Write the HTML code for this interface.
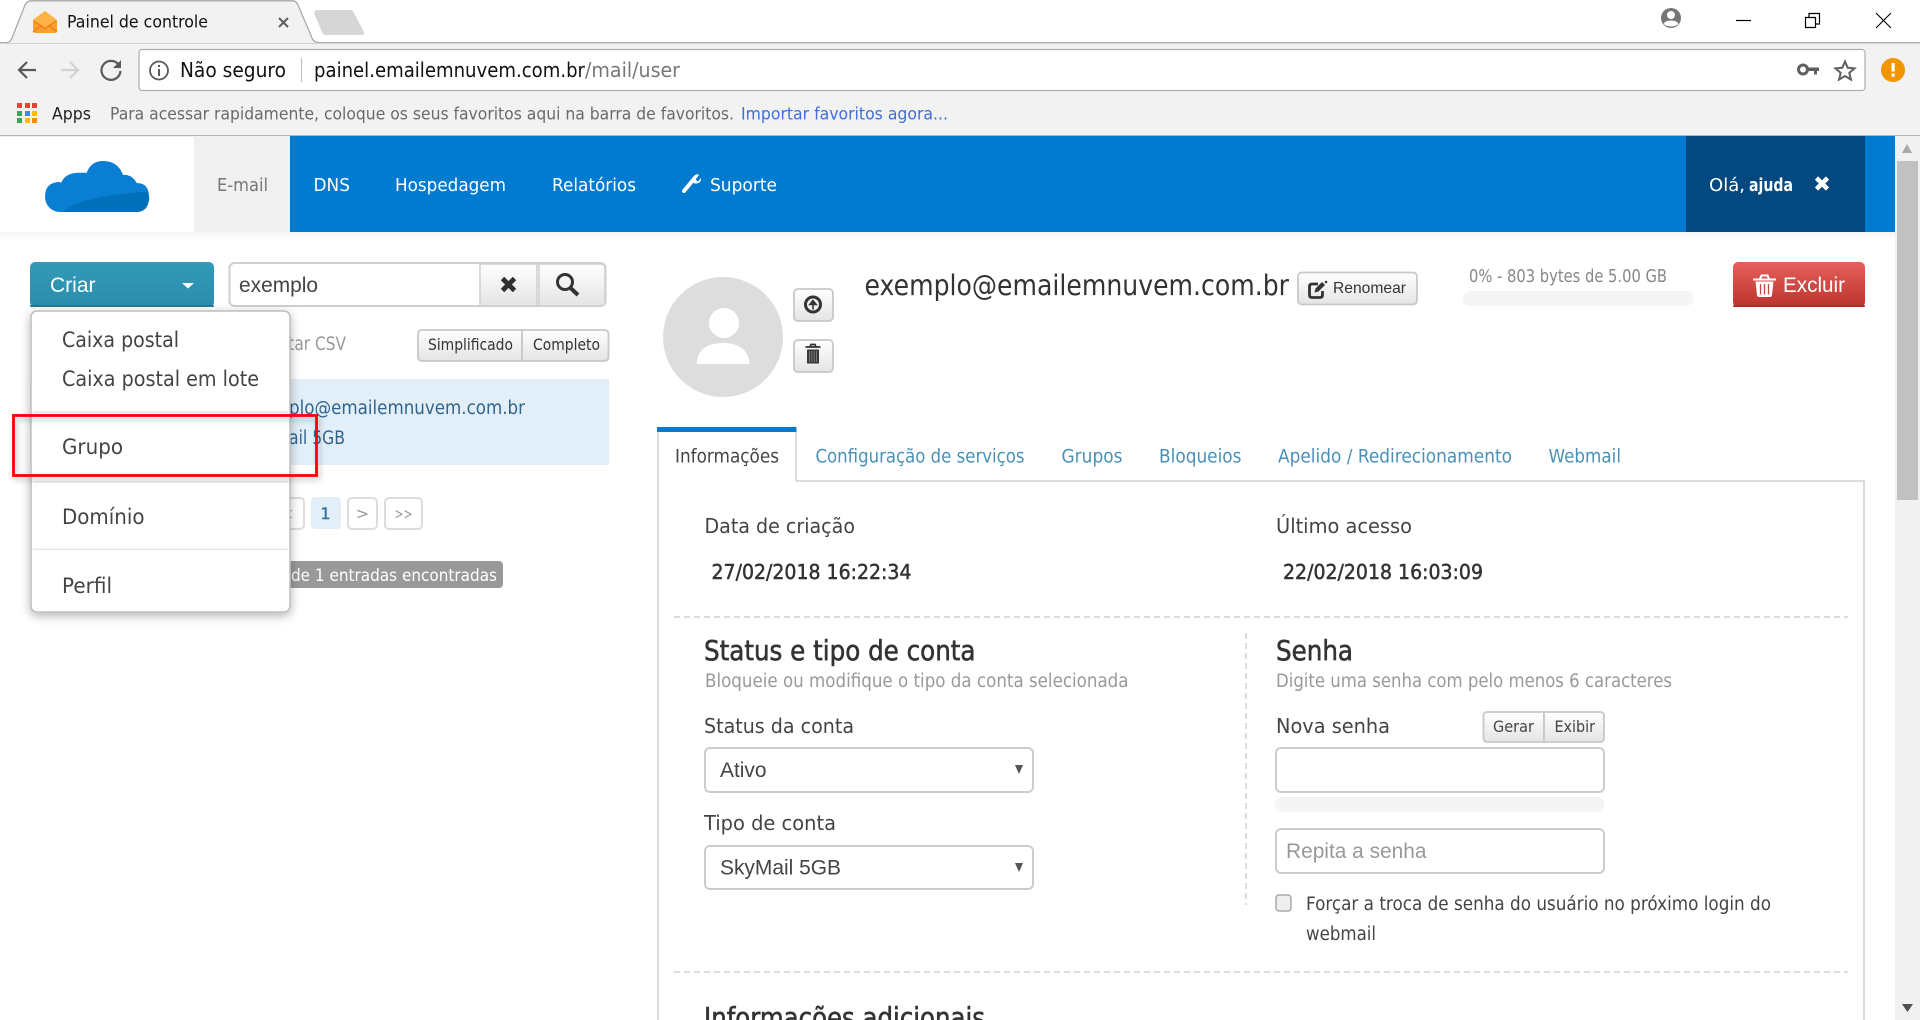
<!DOCTYPE html>
<html lang="pt-BR">
<head>
<meta charset="utf-8">
<title>Painel de controle</title>
<style>
html,body{margin:0;padding:0;background:#fff;width:1920px;height:1020px;overflow:hidden}
svg{display:block}
text{font-family:"DejaVu Sans","Liberation Sans",sans-serif;white-space:pre}
.a{font-family:"Liberation Sans",Arial,sans-serif}
</style>
</head>
<body>
<svg xmlns="http://www.w3.org/2000/svg" width="1920" height="1020" viewBox="0 0 1920 1020">
<defs>
<linearGradient id="gb" x1="0" y1="0" x2="0" y2="1"><stop offset="0" stop-color="#fff"/><stop offset="1" stop-color="#e4e4e4"/></linearGradient>
<linearGradient id="gc" x1="0" y1="0" x2="0" y2="1"><stop offset="0" stop-color="#349ab9"/><stop offset="1" stop-color="#2a8dab"/></linearGradient>
<linearGradient id="gr" x1="0" y1="0" x2="0" y2="1"><stop offset="0" stop-color="#e65f5c"/><stop offset="1" stop-color="#bb352e"/></linearGradient>
<linearGradient id="gn" x1="0" y1="0" x2="0" y2="1"><stop offset="0" stop-color="#dcdcdc"/><stop offset="1" stop-color="#fff"/></linearGradient>
<filter id="sh" x="-20%" y="-20%" width="140%" height="140%"><feDropShadow dx="0" dy="3" stdDeviation="5" flood-color="#000" flood-opacity=".3"/></filter>
<filter id="sh2" x="-10%" y="-20%" width="120%" height="150%"><feDropShadow dx="2" dy="3" stdDeviation="3" flood-color="#000" flood-opacity=".25"/></filter>
</defs>

<!-- Browser chrome -->
<rect width="1920" height="136" fill="#f2f2f2"/>
<rect width="1920" height="43" fill="#fff"/>
<rect y="42" width="1920" height="1.500" fill="#b4b4b4"/>
<path d="M0 43H7Q10 43 12 38L25 5Q27 .8 31 .8H293Q296 .8 298 5L312 38Q314 43 318 43H0Z" fill="#f2f2f2"/>
<path d="M7 42.500Q10 42.500 12 38L25 5Q27 .8 31 .8H293Q296 .8 298 5L312 38Q314 42.500 318 42.500" fill="none" stroke="#aaa" stroke-width="1.300"/>
<path d="M33 20L45 11L57 20V30Q57 33 54 33H36Q33 33 33 30Z" fill="#f9a02c"/>
<path d="M33 20L45 28L57 20L45 11Z" fill="#ffb347"/>
<path d="M33 32L42 25M57 32L48 25M34 21L45 28.500L56 21" stroke="#ef7d18" stroke-width="1.300" fill="none"/>
<text x="67" y="27.500" font-size="16.500" fill="#111" textLength="141" lengthAdjust="spacingAndGlyphs">Painel de controle</text>
<path d="M279 18L288 27M288 18L279 27" stroke="#5f5f5f" stroke-width="2"/>
<path d="M314 13Q314 10 318 10H350Q353 10 354 13L364 32Q365 35 361 35H326Q323 35 322 32Z" fill="#d6d6d6"/>

<circle cx="1671" cy="18" r="10" fill="#757575"/>
<circle cx="1671" cy="15" r="4" fill="#fff"/>
<path d="M1663.500 24Q1665 20.500 1671 20.500T1678.500 24Q1675.500 26.500 1671 26.500T1663.500 24Z" fill="#fff"/>
<path d="M1736 20.500H1751" stroke="#000" stroke-width="1.200"/>
<path d="M1805.500 17.500H1815.500V27.500H1805.500ZM1809 17V13.500H1819.500V24H1816" fill="none" stroke="#000" stroke-width="1.200"/>
<path d="M1876 13L1891 28M1891 13L1876 28" stroke="#000" stroke-width="1.100"/>

<path d="M36 70H19M27 62L19 70L27 78" fill="none" stroke="#5a5a5a" stroke-width="2.200"/>
<path d="M78 70H61M70 62L78 70L70 78" fill="none" stroke="#d2d2d2" stroke-width="2.200"/>
<path d="M118.500 64.500A9.500 9.500 0 1 0 120.500 71" fill="none" stroke="#5a5a5a" stroke-width="2.200"/>
<path d="M121 60V68H113Z" fill="#5a5a5a"/>

<rect x="139" y="49.500" width="1726" height="41" rx="3" fill="#fff" stroke="#aeaeae" stroke-width="1.200"/>
<circle cx="159" cy="70.500" r="9" fill="none" stroke="#5a5a5a" stroke-width="1.800"/>
<rect x="158" y="69" width="2" height="7" fill="#5a5a5a"/><rect x="158" y="65" width="2" height="2" fill="#5a5a5a"/>
<text x="180" y="77" font-size="20" fill="#111" textLength="106" lengthAdjust="spacingAndGlyphs">Não seguro</text>
<rect x="301" y="58" width="1" height="24" fill="#bdbdbd"/>
<text x="314" y="77" font-size="20" fill="#111" textLength="271" lengthAdjust="spacingAndGlyphs">painel.emailemnuvem.com.br</text>
<text x="585" y="77" font-size="20" fill="#777" textLength="95" lengthAdjust="spacingAndGlyphs">/mail/user</text>

<circle cx="1803" cy="69.500" r="4.500" fill="none" stroke="#5f5f5f" stroke-width="3"/>
<path d="M1807 67.500H1819V71H1817V74.500H1814V71H1807Z" fill="#5f5f5f"/>
<path d="M1845 61.500L1847.700 67.800L1854.500 68.400L1849.300 72.900L1850.900 79.500L1845 76L1839.100 79.500L1840.700 72.900L1835.500 68.400L1842.300 67.800Z" fill="none" stroke="#5f5f5f" stroke-width="2"/>
<circle cx="1893" cy="70" r="12" fill="#f29500"/>
<rect x="1891.500" y="63" width="3.200" height="8.500" fill="#fff"/><rect x="1891.500" y="73.500" width="3.200" height="3.200" fill="#fff"/>

<g>
<rect x="17" y="103" width="5" height="5" fill="#ea4335"/><rect x="25" y="103" width="5" height="5" fill="#ea4335"/><rect x="32" y="103" width="5" height="5" fill="#ea4335"/>
<rect x="17" y="111" width="5" height="5" fill="#34a853"/><rect x="25" y="111" width="5" height="5" fill="#4285f4"/><rect x="32" y="111" width="5" height="5" fill="#fbbc05"/>
<rect x="17" y="118" width="5" height="5" fill="#34a853"/><rect x="25" y="118" width="5" height="5" fill="#fbbc05"/><rect x="32" y="118" width="5" height="5" fill="#fb8c00"/>
</g>
<text x="52" y="119.500" font-size="16.500" fill="#222" textLength="39" lengthAdjust="spacingAndGlyphs">Apps</text>
<text x="110" y="119.500" font-size="16.500" fill="#6a6a6a" textLength="624" lengthAdjust="spacingAndGlyphs">Para acessar rapidamente, coloque os seus favoritos aqui na barra de favoritos.</text>
<text x="741" y="119.500" font-size="16.500" fill="#3f6fd8" textLength="207" lengthAdjust="spacingAndGlyphs">Importar favoritos agora...</text>
<rect y="135" width="1920" height="1.200" fill="#b4b4b4"/>

<!-- Top nav -->
<rect y="232" width="1895" height="8" fill="url(#gn)" opacity=".35"/>
<rect x="194" y="136" width="96" height="96" fill="#f0f0f0"/>
<rect x="290" y="136" width="1605" height="96" fill="#007bd0"/>
<rect x="1686" y="136" width="179" height="96" fill="#03497f"/>
<path d="M60 212A15 15 0 0 1 45 197Q45 183 58 182Q60 181.500 61 183Q65 173 78 172.700L86.700 172.700Q91 161 103 161Q118 161 123 175Q132 174 136.700 183Q149 183 149 197Q149 212 136 212Z" fill="#0a7ed2"/>
<path d="M63 212Q80 196 147 191.700Q150 196 149 200Q147 212 136 212Z" fill="#0070b9"/>
<text x="217" y="191" font-size="18" fill="#777" textLength="51" lengthAdjust="spacingAndGlyphs">E-mail</text>
<text x="313.500" y="191" font-size="18" fill="#fff" textLength="36.500" lengthAdjust="spacingAndGlyphs">DNS</text>
<text x="395" y="191" font-size="18" fill="#fff" textLength="111" lengthAdjust="spacingAndGlyphs">Hospedagem</text>
<text x="552" y="191" font-size="18" fill="#fff" textLength="84" lengthAdjust="spacingAndGlyphs">Relatórios</text>
<path d="M684 191L693.500 179.500" stroke="#fff" stroke-width="4" stroke-linecap="round"/>
<path d="M691.500 181A5.500 7 30 0 1 697 174L699 175L695.500 179.500L698 181.500L701 178Q701.500 184 694.500 183.500Z" fill="#fff"/>
<text x="710" y="191" font-size="18" fill="#fff" textLength="67" lengthAdjust="spacingAndGlyphs">Suporte</text>
<text x="1709" y="191" font-size="18" fill="#fff" textLength="36" lengthAdjust="spacingAndGlyphs">Olá,</text>
<text x="1749" y="191" font-size="18" font-weight="700" fill="#fff" textLength="44" lengthAdjust="spacingAndGlyphs">ajuda</text>
<path d="M1816.500 178L1827.500 189M1827.500 178L1816.500 189" stroke="#fff" stroke-width="4.500"/>

<!-- Scrollbar -->
<rect x="1895" y="136" width="25" height="884" fill="#f1f1f1"/>
<rect x="1897" y="161" width="21" height="339" fill="#c1c1c1"/>
<path d="M1907 144L1912 153H1902Z" fill="#a8a8a8"/>
<path d="M1902 1004H1913L1907.500 1012Z" fill="#505050"/>

<!-- Left column -->
<rect x="30" y="262" width="184" height="45" rx="5" fill="url(#gc)"/>
<rect x="30" y="305" width="184" height="2" rx="1" fill="#23788f"/>
<text class="a" x="50" y="292" font-size="21" fill="#fff" textLength="45.500" lengthAdjust="spacingAndGlyphs">Criar</text>
<path d="M182 283H194L188 288.500Z" fill="#fff"/>

<rect x="229.500" y="263" width="376" height="43" rx="5" fill="#fff" stroke="#cfcfcf" stroke-width="2"/>
<text class="a" x="239" y="292" font-size="21" fill="#444" textLength="79" lengthAdjust="spacingAndGlyphs">exemplo</text>
<path d="M480 264H537V306H480Z" fill="url(#gb)" stroke="#cfcfcf" stroke-width="1.500"/>
<path d="M539 264H601Q605 264 605 268V302Q605 306 601 306H539Z" fill="url(#gb)" stroke="#cfcfcf" stroke-width="1.500"/>
<path d="M502.500 278.500L514.500 290.500M514.500 278.500L502.500 290.500" stroke="#2f2f2f" stroke-width="4.800"/>
<circle cx="565" cy="282" r="7.500" fill="none" stroke="#333" stroke-width="3"/>
<path d="M570 287.500L578 295" stroke="#333" stroke-width="4"/>

<text x="244" y="350" font-size="18.500" fill="#999" textLength="102" lengthAdjust="spacingAndGlyphs">Exportar CSV</text>
<path d="M422.500 330H522V361H422.500Q418 361 418 357V334Q418 330 422.500 330Z" fill="url(#gb)" stroke="#c8c8c8" stroke-width="1.800"/>
<path d="M522 330H604Q608.500 330 608.500 334V357Q608.500 361 604 361H522Z" fill="url(#gb)" stroke="#c8c8c8" stroke-width="1.800"/>
<text x="428" y="350" font-size="16" fill="#333" textLength="85" lengthAdjust="spacingAndGlyphs">Simplificado</text>
<text x="533" y="350" font-size="16" fill="#333" textLength="67" lengthAdjust="spacingAndGlyphs">Completo</text>

<rect x="30" y="379" width="579" height="86" fill="#e2eff9"/>
<text x="289" y="414" font-size="18.500" fill="#31648c" textLength="236" lengthAdjust="spacingAndGlyphs">plo@emailemnuvem.com.br</text>
<text x="289" y="444" font-size="18.500" fill="#31648c" textLength="56" lengthAdjust="spacingAndGlyphs">ail 5GB</text>

<rect x="270" y="498" width="34" height="31" rx="4" fill="#fff" stroke="#ddd" stroke-width="2"/>
<text x="287" y="519" font-size="16" fill="#999" text-anchor="middle">&lt;</text>
<rect x="311" y="497" width="30" height="32" rx="4" fill="#e2eff9"/>
<text x="325.500" y="519" font-size="16" fill="#31759f" text-anchor="middle" stroke="#31759f" stroke-width=".4">1</text>
<rect x="348" y="498" width="29" height="31" rx="4" fill="#fff" stroke="#ddd" stroke-width="2"/>
<text x="362.500" y="519" font-size="16" fill="#999" text-anchor="middle">&gt;</text>
<rect x="385" y="498" width="37" height="31" rx="4" fill="#fff" stroke="#ddd" stroke-width="2"/>
<text x="403.500" y="519" font-size="15" fill="#999" text-anchor="middle" textLength="18" lengthAdjust="spacingAndGlyphs">&gt;&gt;</text>

<rect x="200" y="561" width="303" height="27" rx="4" fill="#999"/>
<text x="291" y="581" font-size="17" fill="#fff" textLength="206" lengthAdjust="spacingAndGlyphs">de 1 entradas encontradas</text>

<!-- Dropdown -->
<rect x="31" y="311" width="259" height="301" rx="6" fill="#fff" stroke="#bdbdbd" stroke-width="1.500" filter="url(#sh)"/>
<text x="62" y="347" font-size="21" fill="#444" textLength="117" lengthAdjust="spacingAndGlyphs">Caixa postal</text>
<text x="62" y="386" font-size="21" fill="#444" textLength="197" lengthAdjust="spacingAndGlyphs">Caixa postal em lote</text>
<rect x="33" y="411.500" width="255" height="1.500" fill="#e8e8e8"/>
<text x="62" y="454" font-size="21" fill="#444" textLength="61" lengthAdjust="spacingAndGlyphs">Grupo</text>
<rect x="33" y="481" width="255" height="1.500" fill="#e8e8e8"/>
<text x="62" y="524" font-size="21" fill="#444" textLength="82.500" lengthAdjust="spacingAndGlyphs">Domínio</text>
<rect x="33" y="548.500" width="255" height="1.500" fill="#e8e8e8"/>
<text x="62" y="593" font-size="21" fill="#444" textLength="50" lengthAdjust="spacingAndGlyphs">Perfil</text>

<!-- Red highlight -->
<rect x="13.500" y="415.500" width="303" height="60" fill="none" stroke="#f00" stroke-width="2.800" filter="url(#sh2)"/>

<!-- Profile header -->
<circle cx="723" cy="337" r="60" fill="#ddd"/>
<circle cx="724" cy="323" r="15" fill="#fff"/>
<path d="M696.500 364Q698 343 723 343T749.500 364Z" fill="#fff"/>
<rect x="794" y="289" width="39" height="32" rx="4" fill="url(#gb)" stroke="#c8c8c8" stroke-width="1.800"/>
<circle cx="813" cy="304.500" r="7.500" fill="none" stroke="#333" stroke-width="3"/>
<path d="M813 309.500V302M809.800 304.500L813 300.500L816.200 304.500Z" fill="#333" stroke="#333" stroke-width="1.600"/>
<rect x="794" y="340" width="39" height="32" rx="4" fill="url(#gb)" stroke="#c8c8c8" stroke-width="1.800"/>
<path d="M805.500 347H820.500M810 347L811 344.500H815L816 347" fill="none" stroke="#333" stroke-width="1.800"/>
<rect x="807" y="349.500" width="12" height="14" fill="#3a3a3a"/>
<path d="M809.500 351V362M811.800 351V362M814.200 351V362M816.500 351V362" stroke="#8a8a8a" stroke-width=".8"/>

<text x="864.500" y="295" font-size="28.500" fill="#333" textLength="424.500" lengthAdjust="spacingAndGlyphs">exemplo@emailemnuvem.com.br</text>
<rect x="1298" y="272.500" width="119" height="32" rx="4" fill="url(#gb)" stroke="#c8c8c8" stroke-width="1.800"/>
<path d="M1318 284H1312Q1309.500 284 1309.500 286.500V295Q1309.500 297.500 1312 297.500H1320Q1322.500 297.500 1322.500 295V291" fill="none" stroke="#333" stroke-width="2.800"/>
<path d="M1314.500 292.500L1315.500 288.500L1322 282L1325 285L1318.500 291.500Z" fill="#333"/><circle cx="1326" cy="282" r="1.300" fill="#333"/>
<text class="a" x="1333" y="293" font-size="16" fill="#333" textLength="73" lengthAdjust="spacingAndGlyphs">Renomear</text>

<text x="1469" y="282" font-size="17.500" fill="#888" textLength="198" lengthAdjust="spacingAndGlyphs">0% - 803 bytes de 5.00 GB</text>
<rect x="1463" y="291" width="230" height="15" rx="7" fill="#f5f5f5"/>

<rect x="1733" y="262" width="132" height="45" rx="5" fill="url(#gr)"/>
<rect x="1733" y="305" width="132" height="2" rx="1" fill="#ae3029"/>
<path d="M1753 279.500H1776M1760 279L1761.500 275.500H1767.500L1769 279" fill="none" stroke="#fff" stroke-width="2"/>
<path d="M1755.500 281.500H1773.500L1772 295Q1771.800 297 1770 297H1759Q1757.200 297 1757 295Z" fill="#fff"/>
<path d="M1760.500 284V294.500M1764.500 284V294.500M1768.500 284V294.500" stroke="#c9453f" stroke-width="1.300"/>
<text class="a" x="1783" y="292" font-size="21" fill="#fff" textLength="62" lengthAdjust="spacingAndGlyphs">Excluir</text>

<!-- Tabs -->
<rect x="796" y="480" width="1069" height="2" fill="#ddd"/>
<rect x="657" y="432" width="2" height="588" fill="#ddd"/>
<rect x="795" y="432" width="2" height="49" fill="#ddd"/>
<rect x="1863" y="480" width="2" height="540" fill="#ddd"/>
<rect x="657" y="427" width="139.500" height="5" fill="#007bd0"/>
<text x="675" y="462.500" font-size="18.500" fill="#444" textLength="104" lengthAdjust="spacingAndGlyphs">Informações</text>
<text x="815.500" y="462.500" font-size="18.500" fill="#4a90b5" textLength="209" lengthAdjust="spacingAndGlyphs">Configuração de serviços</text>
<text x="1061.500" y="462.500" font-size="18.500" fill="#4a90b5" textLength="61" lengthAdjust="spacingAndGlyphs">Grupos</text>
<text x="1159" y="462.500" font-size="18.500" fill="#4a90b5" textLength="82.500" lengthAdjust="spacingAndGlyphs">Bloqueios</text>
<text x="1278" y="462.500" font-size="18.500" fill="#4a90b5" textLength="234" lengthAdjust="spacingAndGlyphs">Apelido / Redirecionamento</text>
<text x="1548.500" y="462.500" font-size="18.500" fill="#4a90b5" textLength="72.500" lengthAdjust="spacingAndGlyphs">Webmail</text>

<!-- Panel body -->
<text x="704.500" y="533" font-size="20.500" fill="#444" textLength="150.500" lengthAdjust="spacingAndGlyphs">Data de criação</text>
<text x="711.500" y="579" font-size="20.500" fill="#333" stroke="#333" stroke-width=".5" textLength="200" lengthAdjust="spacingAndGlyphs">27/02/2018 16:22:34</text>
<text x="1276" y="533" font-size="20.500" fill="#444" textLength="136" lengthAdjust="spacingAndGlyphs">Último acesso</text>
<text x="1283" y="579" font-size="20.500" fill="#333" stroke="#333" stroke-width=".5" textLength="200" lengthAdjust="spacingAndGlyphs">22/02/2018 16:03:09</text>
<path d="M674 617H1848M674 972H1848" stroke="#ddd" stroke-width="2" stroke-dasharray="6 4"/>
<path d="M1246 633V905" stroke="#ddd" stroke-width="2" stroke-dasharray="6 4"/>

<text x="704" y="660" font-size="28" fill="#333" textLength="271.500" lengthAdjust="spacingAndGlyphs" stroke="#333" stroke-width=".6">Status e tipo de conta</text>
<text x="705" y="687" font-size="18.500" fill="#999" textLength="423.500" lengthAdjust="spacingAndGlyphs">Bloqueie ou modifique o tipo da conta selecionada</text>
<text x="704" y="733" font-size="20.500" fill="#444" textLength="150" lengthAdjust="spacingAndGlyphs">Status da conta</text>
<rect x="705" y="748" width="328" height="44" rx="5" fill="#fff" stroke="#ccc" stroke-width="2"/>
<text class="a" x="720" y="777" font-size="21" fill="#444" textLength="46.500" lengthAdjust="spacingAndGlyphs">Ativo</text>
<path d="M1015 765H1023L1019 774Z" fill="#555"/>
<text x="704" y="830" font-size="20.500" fill="#444" textLength="132" lengthAdjust="spacingAndGlyphs">Tipo de conta</text>
<rect x="705" y="846" width="328" height="43" rx="5" fill="#fff" stroke="#ccc" stroke-width="2"/>
<text class="a" x="720" y="874.500" font-size="21" fill="#444" textLength="121" lengthAdjust="spacingAndGlyphs">SkyMail 5GB</text>
<path d="M1015 863H1023L1019 872Z" fill="#555"/>

<text x="1276" y="660" font-size="28" fill="#333" textLength="77" lengthAdjust="spacingAndGlyphs" stroke="#333" stroke-width=".6">Senha</text>
<text x="1276" y="687" font-size="18.500" fill="#999" textLength="396" lengthAdjust="spacingAndGlyphs">Digite uma senha com pelo menos 6 caracteres</text>
<text x="1276" y="733" font-size="20.500" fill="#444" textLength="114" lengthAdjust="spacingAndGlyphs">Nova senha</text>
<path d="M1544 712H1487Q1483.500 712 1483.500 716V738Q1483.500 742 1487 742H1544Z" fill="url(#gb)" stroke="#c8c8c8" stroke-width="1.800"/>
<path d="M1544 712H1600Q1604 712 1604 716V738Q1604 742 1600 742H1544Z" fill="url(#gb)" stroke="#c8c8c8" stroke-width="1.800"/>
<text x="1493" y="732" font-size="16" fill="#444" textLength="41" lengthAdjust="spacingAndGlyphs">Gerar</text>
<text x="1554.500" y="732" font-size="16" fill="#444" textLength="40.500" lengthAdjust="spacingAndGlyphs">Exibir</text>
<rect x="1276" y="748" width="328" height="44" rx="5" fill="#fff" stroke="#ccc" stroke-width="2"/>
<rect x="1275" y="797" width="329" height="15" rx="7" fill="#f5f5f5"/>
<rect x="1276" y="829" width="328" height="44" rx="5" fill="#fff" stroke="#ccc" stroke-width="2"/>
<text class="a" x="1286" y="858" font-size="21" fill="#999" textLength="140.500" lengthAdjust="spacingAndGlyphs">Repita a senha</text>
<rect x="1276" y="895" width="15" height="16" rx="3" fill="#eee" stroke="#aaa" stroke-width="1.500"/>
<text x="1306" y="910" font-size="18.500" fill="#444" textLength="465" lengthAdjust="spacingAndGlyphs">Forçar a troca de senha do usuário no próximo login do</text>
<text x="1306" y="940" font-size="18.500" fill="#444" textLength="70" lengthAdjust="spacingAndGlyphs">webmail</text>

<text x="704" y="1027" font-size="28" fill="#333" textLength="281" lengthAdjust="spacingAndGlyphs" stroke="#333" stroke-width=".6">Informações adicionais</text>
</svg>
</body>
</html>
